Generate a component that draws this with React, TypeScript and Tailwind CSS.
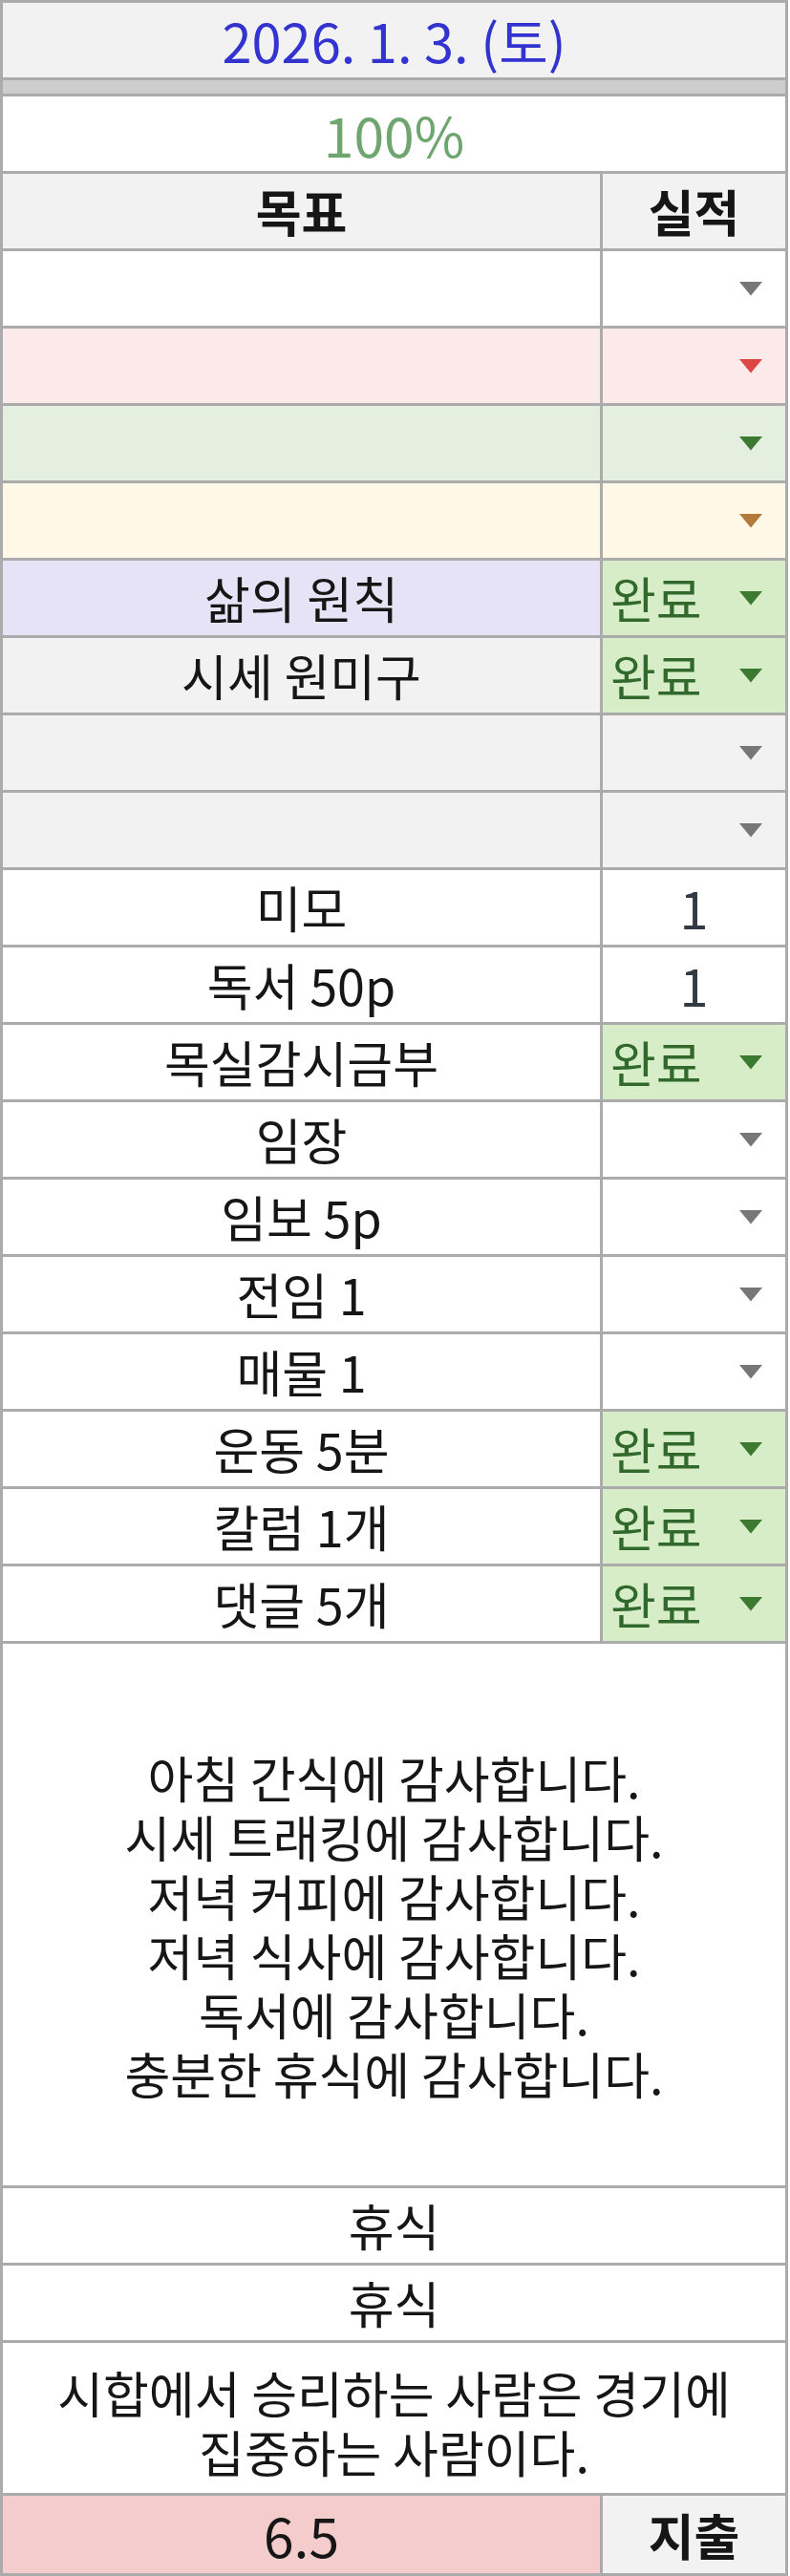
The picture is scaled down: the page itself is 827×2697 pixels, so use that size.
type Mark = 'gray' | 'red' | 'green' | 'brown' | 'done' | 'none';

interface RowData {
  goal?: string;
  value?: string;
  mark: Mark;
  goalBg: string;
  valueBg: string;
}

const caretColor: Record<Mark, string> = {
  gray: '#777777',
  red: '#dd4545',
  green: '#3c7a32',
  brown: '#b27b3a',
  done: '#3c7a32',
  none: 'transparent',
};

const rows: RowData[] = [
  { mark: 'gray', goalBg: 'bg-white', valueBg: 'bg-white' },
  { mark: 'red', goalBg: 'bg-[#fce9e9]', valueBg: 'bg-[#fce9e9]' },
  { mark: 'green', goalBg: 'bg-[#e5efdf]', valueBg: 'bg-[#e5efdf]' },
  { mark: 'brown', goalBg: 'bg-[#fff8e7]', valueBg: 'bg-[#fff8e7]' },
  { goal: '삶의 원칙', mark: 'done', goalBg: 'bg-[#e7e3f6]', valueBg: 'bg-[#d6edc8]' },
  { goal: '시세 원미구', mark: 'done', goalBg: 'bg-[#f2f2f2]', valueBg: 'bg-[#d6edc8]' },
  { mark: 'gray', goalBg: 'bg-[#f2f2f2]', valueBg: 'bg-[#f2f2f2]' },
  { mark: 'gray', goalBg: 'bg-[#f2f2f2]', valueBg: 'bg-[#f2f2f2]' },
  { goal: '미모', value: '1', mark: 'none', goalBg: 'bg-white', valueBg: 'bg-white' },
  { goal: '독서 50p', value: '1', mark: 'none', goalBg: 'bg-white', valueBg: 'bg-white' },
  { goal: '목실감시금부', mark: 'done', goalBg: 'bg-white', valueBg: 'bg-[#d6edc8]' },
  { goal: '임장', mark: 'gray', goalBg: 'bg-white', valueBg: 'bg-white' },
  { goal: '임보 5p', mark: 'gray', goalBg: 'bg-white', valueBg: 'bg-white' },
  { goal: '전임 1', mark: 'gray', goalBg: 'bg-white', valueBg: 'bg-white' },
  { goal: '매물 1', mark: 'gray', goalBg: 'bg-white', valueBg: 'bg-white' },
  { goal: '운동 5분', mark: 'done', goalBg: 'bg-white', valueBg: 'bg-[#d6edc8]' },
  { goal: '칼럼 1개', mark: 'done', goalBg: 'bg-white', valueBg: 'bg-[#d6edc8]' },
  { goal: '댓글 5개', mark: 'done', goalBg: 'bg-white', valueBg: 'bg-[#d6edc8]' },
];

const thanks = [
  '아침 간식에 감사합니다.',
  '시세 트래킹에 감사합니다.',
  '저녁 커피에 감사합니다.',
  '저녁 식사에 감사합니다.',
  '독서에 감사합니다.',
  '충분한 휴식에 감사합니다.',
];

function Caret({ color }: { color: string }) {
  return (
    <svg width="26" height="16" viewBox="0 0 26 16" className="shrink-0">
      <path d="M1 1h24L13 15.5z" fill={color} />
    </svg>
  );
}

function GoalRow({ row }: { row: RowData }) {
  return (
    <div className="flex h-[81px] border-b-[3px] border-[#ababab]">
      <div className={`flex w-[628px] items-center justify-center border-r-[3px] border-[#ababab] ${row.goalBg}`}>
        {row.goal}
      </div>
      <div className={`relative flex flex-1 items-center ${row.valueBg}`}>
        {row.mark === 'done' && <span className="pl-[8px] text-[#30692b]">완료</span>}
        {row.value && <span className="w-full text-center text-[54px] text-[#333a44]">{row.value}</span>}
        {row.mark !== 'none' && (
          <div className="absolute right-[23px] top-1/2 -translate-y-1/2">
            <Caret color={caretColor[row.mark]} />
          </div>
        )}
      </div>
    </div>
  );
}

export default function App() {
  return (
    <div className="w-[827px] bg-white font-['Noto_Sans_CJK_KR',sans-serif] text-[52px] leading-none text-[#161616]">
      <div className="w-[825px] border-x-[3px] border-[#ababab]">
        {/* date */}
        <div className="flex h-[84px] items-center justify-center border-y-[3px] border-[#ababab] bg-[#f2f2f2] text-[56px] text-[#3333cf]">
          2026. 1. 3. (토)
        </div>
        <div className="h-[17px] border-b-[3px] border-[#ababab] bg-[#cdcdcd]" />

        {/* rate */}
        <div className="flex h-[81px] items-center justify-center border-b-[3px] border-[#ababab] bg-white text-[57px] text-[#6fa56f]">
          100%
        </div>

        {/* header */}
        <div className="flex h-[81px] border-b-[3px] border-[#ababab] bg-[#f2f2f2] font-bold">
          <div className="flex w-[628px] items-center justify-center border-r-[3px] border-[#ababab]">목표</div>
          <div className="flex flex-1 items-center justify-center">실적</div>
        </div>

        {rows.map((row, i) => (
          <GoalRow key={i} row={row} />
        ))}

        {/* gratitude */}
        <div className="flex h-[570px] flex-col items-center justify-center border-b-[3px] border-[#ababab] pt-[22px] leading-[62px]">
          {thanks.map((t) => (
            <div key={t}>{t}</div>
          ))}
        </div>

        <div className="flex h-[81px] items-center justify-center border-b-[3px] border-[#ababab]">휴식</div>
        <div className="flex h-[81px] items-center justify-center border-b-[3px] border-[#ababab]">휴식</div>

        <div className="flex h-[160px] flex-col items-center justify-center border-b-[3px] border-[#ababab] pt-[8px] leading-[62px]">
          <div>시합에서 승리하는 사람은 경기에</div>
          <div>집중하는 사람이다.</div>
        </div>

        {/* expense */}
        <div className="flex h-[84px] border-b-[3px] border-[#ababab]">
          <div className="flex w-[628px] items-center justify-center border-r-[3px] border-[#ababab] bg-[#f4cccc] text-[57px]">
            6.5
          </div>
          <div className="flex flex-1 items-center justify-center bg-[#f2f2f2] font-bold">지출</div>
        </div>
      </div>
    </div>
  );
}
